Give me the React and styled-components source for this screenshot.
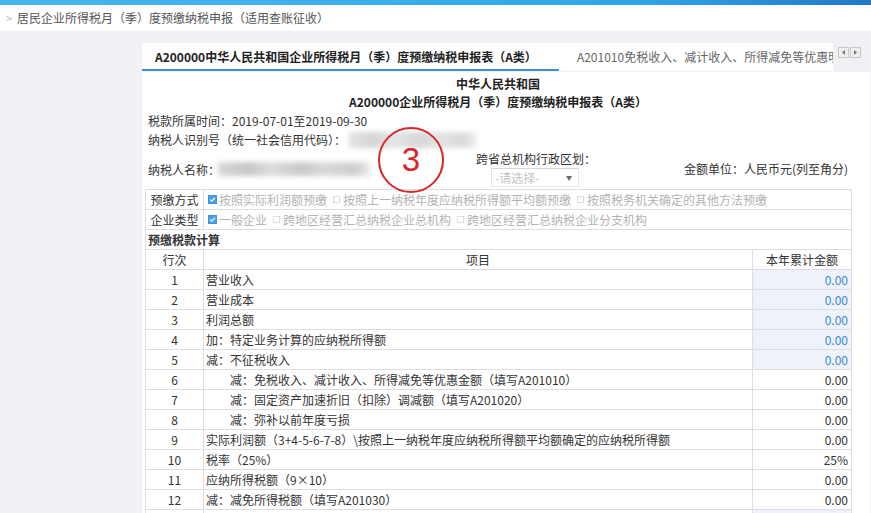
import React from 'react';
import styled, { createGlobalStyle } from 'styled-components';

const Global = createGlobalStyle`
  html, body {
    margin: 0;
    padding: 0;
    background: #f0f1f5;
    font-family: "Noto Sans CJK SC", "Liberation Sans", sans-serif;
    font-size: 12px;
    color: #333;
  }
`;

const Page = styled.div`
  width: 871px;
  height: 513px;
  overflow: hidden;
  background: #f0f1f5;
`;

const TopBar = styled.div`
  height: 5px;
  background: linear-gradient(90deg, #46b4ee 0%, #3cb0ec 40%, #2fa3e6 75%, #2377c3 100%);
`;

const Crumb = styled.div`
  height: 26px;
  background: #fff;
  display: flex;
  align-items: center;
  padding-left: 6px;
  color: #555;
  line-height: 26px;
`;

const CrumbArrow = styled.span`
  color: #b5b5b5;
  margin-right: 5px;
  font-size: 11px;
`;

const Main = styled.div`
  padding: 12px 0 0 142px;
`;

const TabRow = styled.div`
  display: flex;
  align-items: flex-start;
`;

const Tabs = styled.div`
  width: 691px;
  height: 28px;
  background: #fff;
  display: flex;
  overflow: hidden;
  white-space: nowrap;
`;

const Tab = styled.div`
  padding: 0 ${p => (p.$active ? '22px' : '0')} 0 ${p => (p.$active ? '13px' : '18px')};
  line-height: 27px;
  font-weight: ${p => (p.$active ? 'bold' : 'normal')};
  color: ${p => (p.$active ? '#222' : '#666')};
  border-bottom: 2px solid ${p => (p.$active ? '#3d8fd6' : 'transparent')};
  height: 26px;
  flex-shrink: ${p => (p.$active ? 0 : 1)};
  overflow: hidden;
`;

const NavBtns = styled.div`
  display: flex;
  gap: 1px;
  margin: 4px 0 0 5px;
`;

const NavBtn = styled.div`
  width: 9px;
  height: 9px;
  border: 1px solid #c8c8c8;
  background: #eee;
  display: flex;
  align-items: center;
  justify-content: center;
  svg { display: block; }
`;

const Content = styled.div`
  position: relative;
  width: 714px;
  margin-top: 1px;
  background: #fff;
  padding: 3px 11px 0 3px;
  height: 460px;
`;

const Heading = styled.div`
  width: 706px;
  text-align: center;
  font-weight: bold;
  line-height: 18px;
  color: #222;
`;

const InfoLine = styled.div`
  padding-left: 3px;
  line-height: 19px;
  display: flex;
  align-items: center;
`;

const Blur = styled.span`
  display: inline-block;
  width: ${p => p.$w}px;
  height: ${p => p.$h}px;
  margin-left: ${p => p.$ml || 0}px;
  background: linear-gradient(90deg, #cfcfcf 0%, #b9b9b9 20%, #d4d4d4 35%, #bcbcbc 55%, #d0d0d0 70%, #c2c2c2 90%, #e6e6e6 100%);
  filter: blur(2.5px);
  opacity: ${p => p.$o || 0.8};
`;

const NameRow = styled.div`
  display: flex;
  align-items: flex-start;
  height: 40px;
  width: 706px;
`;

const NameLeft = styled.div`
  display: flex;
  align-items: center;
  padding-left: 3px;
  height: 40px;
`;

const Region = styled.div`
  margin-left: 106px;
  padding-top: 1px;
  line-height: 18px;
`;

const Select = styled.div`
  margin-left: 15px;
  width: 88px;
  height: 19px;
  border: 1px solid #e6e6e6;
  border-top-color: #d6d6d6;
  display: flex;
  align-items: center;
  justify-content: space-between;
  padding: 0 6px 0 3px;
  box-sizing: border-box;
  color: #c4c4c4;
  font-size: 12px;
`;

const Caret = styled.span`
  color: #666;
  font-size: 6px;
`;

const Unit = styled.div`
  margin-left: auto;
  margin-right: 3px;
  line-height: 40px;
`;

const Table = styled.table`
  border-collapse: collapse;
  width: 706px;
  table-layout: fixed;
`;

const Td = styled.td`
  border: 1px solid #dedede;
  height: 19px;
  padding: 0;
  line-height: 19px;
  white-space: nowrap;
  overflow: hidden;
  vertical-align: middle;
  text-align: ${p => p.$align || 'left'};
  padding-left: ${p => p.$pl || 0}px;
  padding-right: ${p => p.$pr || 0}px;
  color: ${p => (p.$blue ? '#3a87d6' : '#333')};
  background: ${p => (p.$fill ? '#eef3fb' : '#fff')};
  font-weight: ${p => (p.$bold ? 'bold' : 'normal')};
`;

const Options = styled.div`
  display: flex;
  align-items: center;
  height: 19px;
  overflow: hidden;
`;

const Option = styled.span`
  display: flex;
  align-items: center;
  color: #b3b3b3;
  margin-right: 6px;
  line-height: 19px;
`;

const Box = styled.span`
  display: block;
  box-sizing: border-box;
  width: ${p => (p.$on ? 9 : 7)}px;
  height: ${p => (p.$on ? 9 : 7)}px;
  margin-right: ${p => (p.$on ? 2 : 3)}px;
  background: ${p => (p.$on ? '#47a0e6' : '#fff')};
  border: 1px solid ${p => (p.$on ? '#3f97de' : '#dcdcdc')};
  position: relative;
  svg { position: absolute; left: 0; top: 0; }
`;

const Stamp = styled.div`
  position: absolute;
  left: 236px;
  top: 55px;
  width: 62px;
  height: 62px;
  border: 2px solid #d8262b;
  border-radius: 50%;
  color: #d8262b;
  font-family: "Liberation Sans", sans-serif;
  font-size: 33px;
  display: flex;
  align-items: center;
  justify-content: center;
`;

const Check = ({ on, children }) => (
  <Option>
    <Box $on={on}>
      {on && (
        <svg width="7" height="7" viewBox="0 0 7 7">
          <path d="M1.2 3.6 L2.8 5.1 L5.8 1.8" stroke="#fff" strokeWidth="1.2" fill="none" />
        </svg>
      )}
    </Box>
    {children}
  </Option>
);

const rows = [
  ['1', '营业收入', 0, '0.00', true],
  ['2', '营业成本', 0, '0.00', true],
  ['3', '利润总额', 0, '0.00', true],
  ['4', '加：特定业务计算的应纳税所得额', 0, '0.00', true],
  ['5', '减：不征税收入', 0, '0.00', true],
  ['6', '减：免税收入、减计收入、所得减免等优惠金额（填写A201010）', 1, '0.00', false],
  ['7', '减：固定资产加速折旧（扣除）调减额（填写A201020）', 1, '0.00', false],
  ['8', '减：弥补以前年度亏损', 1, '0.00', false],
  ['9', '实际利润额（3+4-5-6-7-8）\\按照上一纳税年度应纳税所得额平均额确定的应纳税所得额', 0, '0.00', false],
  ['10', '税率（25%）', 0, '25%', false],
  ['11', '应纳所得税额（9×10）', 0, '0.00', false],
  ['12', '减：减免所得税额（填写A201030）', 0, '0.00', false],
  ['', '', 0, '', true],
];

export default function App() {
  return (
    <Page>
      <Global />
      <TopBar />
      <Crumb>
        <CrumbArrow>&gt;</CrumbArrow>
        居民企业所得税月（季）度预缴纳税申报（适用查账征收）
      </Crumb>
      <Main>
        <TabRow>
          <Tabs>
            <Tab $active>A200000中华人民共和国企业所得税月（季）度预缴纳税申报表（A类）</Tab>
            <Tab>A201010免税收入、减计收入、所得减免等优惠明细表</Tab>
          </Tabs>
          <NavBtns>
            <NavBtn>
              <svg width="5" height="5" viewBox="0 0 5 5"><path d="M4 0 L1 2.5 L4 5 Z" fill="#777" /></svg>
            </NavBtn>
            <NavBtn>
              <svg width="5" height="5" viewBox="0 0 5 5"><path d="M1 0 L4 2.5 L1 5 Z" fill="#777" /></svg>
            </NavBtn>
          </NavBtns>
        </TabRow>
        <Content>
          <Heading>中华人民共和国</Heading>
          <Heading>A200000企业所得税月（季）度预缴纳税申报表（A类）</Heading>
          <InfoLine>税款所属时间：2019-07-01至2019-09-30</InfoLine>
          <InfoLine>
            纳税人识别号（统一社会信用代码）：
            <Blur $w={128} $h={16} $ml={3} $o={0.6} />
          </InfoLine>
          <NameRow>
            <NameLeft>
              纳税人名称：
              <Blur $w={152} $h={14} $ml={-2} />
            </NameLeft>
            <Region>
              <div>跨省总机构行政区划：</div>
              <Select>
                -请选择-
                <Caret>▼</Caret>
              </Select>
            </Region>
            <Unit>金额单位：人民币元(列至角分)</Unit>
          </NameRow>
          <Table>
            <colgroup>
              <col style={{ width: 58 }} />
              <col style={{ width: 549 }} />
              <col style={{ width: 99 }} />
            </colgroup>
            <tbody>
              <tr>
                <Td $align="center">预缴方式</Td>
                <Td colSpan={2} $pl={4}>
                  <Options>
                    <Check on>按照实际利润额预缴</Check>
                    <Check>按照上一纳税年度应纳税所得额平均额预缴</Check>
                    <Check>按照税务机关确定的其他方法预缴</Check>
                  </Options>
                </Td>
              </tr>
              <tr>
                <Td $align="center">企业类型</Td>
                <Td colSpan={2} $pl={4}>
                  <Options>
                    <Check on>一般企业</Check>
                    <Check>跨地区经营汇总纳税企业总机构</Check>
                    <Check>跨地区经营汇总纳税企业分支机构</Check>
                  </Options>
                </Td>
              </tr>
              <tr>
                <Td colSpan={3} $pl={2} $bold>预缴税款计算</Td>
              </tr>
              <tr>
                <Td $align="center">行次</Td>
                <Td $align="center">项目</Td>
                <Td $align="center">本年累计金额</Td>
              </tr>
              {rows.map(([n, item, indent, val, blue], i) => (
                <tr key={i}>
                  <Td $align="center">{n}</Td>
                  <Td $pl={indent ? 26 : 2}>{item}</Td>
                  <Td $align="right" $pr={3} $blue={blue} $fill={blue}>{val}</Td>
                </tr>
              ))}
            </tbody>
          </Table>
          <Stamp>3</Stamp>
        </Content>
      </Main>
    </Page>
  );
}
